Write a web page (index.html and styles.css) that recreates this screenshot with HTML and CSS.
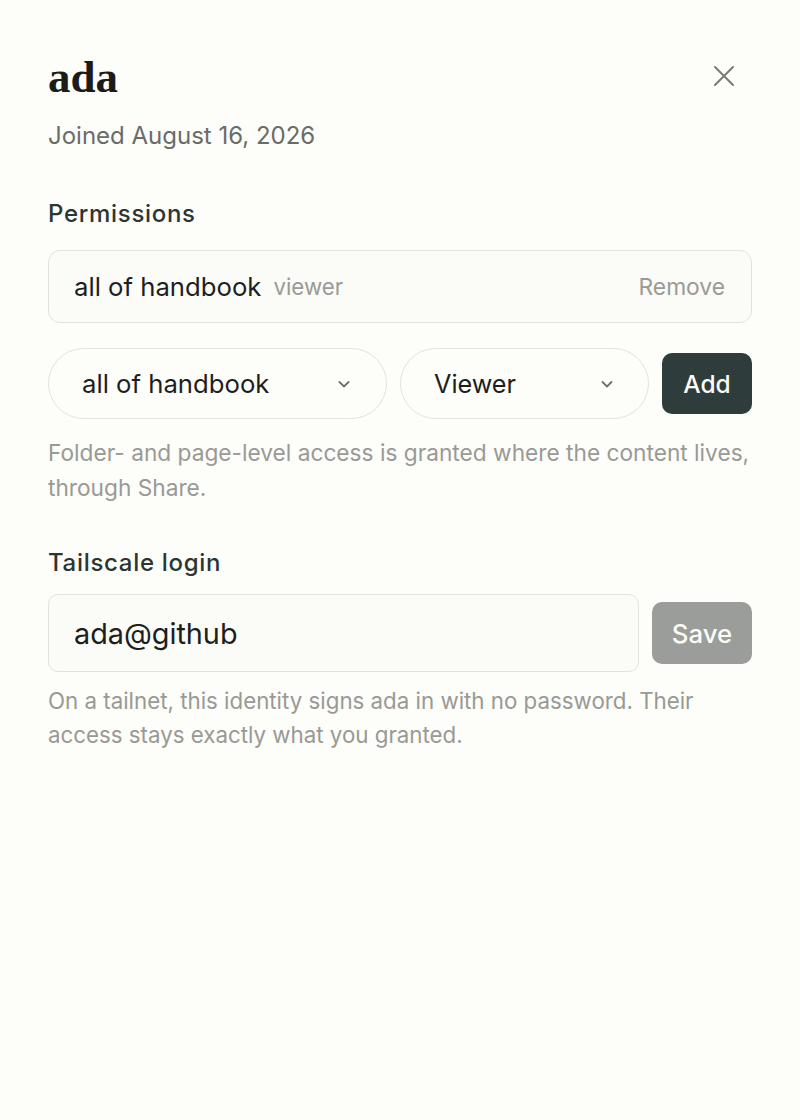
FILE: index.html
```html
<!DOCTYPE html>
<html lang="en">
<head>
<meta charset="utf-8">
<title>ada</title>
<link rel="stylesheet" href="styles.css">
</head>
<body>
<div class="panel">
  <header class="head">
    <h1 class="name">ada</h1>
    <button class="close" aria-label="Close">
      <svg width="24" height="24" viewBox="0 0 24 24" fill="none" stroke="currentColor" stroke-width="2" stroke-linecap="round"><path d="M3 3L21 21M21 3L3 21"/></svg>
    </button>
  </header>
  <p class="joined">Joined August 16, 2026</p>

  <section class="section perms">
    <h2 class="label">Permissions</h2>
    <div class="grant">
      <span class="grant-scope">all of handbook</span>
      <span class="grant-role">viewer</span>
      <span class="grant-remove">Remove</span>
    </div>
    <div class="add-row">
      <div class="select select-scope">
        <span>all of handbook</span>
        <svg class="chev" width="16" height="16" viewBox="0 0 16 16" fill="none" stroke="currentColor" stroke-width="1.8" stroke-linecap="round" stroke-linejoin="round"><path d="M3.5 6L8 10.5L12.5 6"/></svg>
      </div>
      <div class="select select-role">
        <span>Viewer</span>
        <svg class="chev" width="16" height="16" viewBox="0 0 16 16" fill="none" stroke="currentColor" stroke-width="1.8" stroke-linecap="round" stroke-linejoin="round"><path d="M3.5 6L8 10.5L12.5 6"/></svg>
      </div>
      <button class="btn btn-dark">Add</button>
    </div>
    <p class="help">Folder- and page-level access is granted where the content lives, through Share.</p>
  </section>

  <section class="section login">
    <h2 class="label">Tailscale login</h2>
    <div class="login-row">
      <div class="input">ada@github</div>
      <button class="btn btn-muted">Save</button>
    </div>
    <p class="help help-login">On a tailnet, this identity signs ada in with no password. Their access stays exactly what you granted.</p>
  </section>
</div>
</body>
</html>
```

FILE: styles.css
```css
* { box-sizing: border-box; }
html, body {
  margin: 0;
  padding: 0;
  background: #fdfdf9;
  height: 100%;
}
body {
  font-family: Inter, "Noto Sans", sans-serif;
  color: #1d1f1e;
}
.panel {
  padding: 51px 48px 0 48px;
}
.head {
  display: flex;
  justify-content: space-between;
  align-items: flex-start;
}
.name {
  margin: 0;
  font-family: "Liberation Serif", "DejaVu Serif", serif;
  font-weight: 700;
  font-size: 45px;
  line-height: 52px;
  color: #1b1b19;
}
.close {
  border: 0;
  background: none;
  padding: 0;
  margin: 13px 16px 0 0;
  color: #7a7a78;
  width: 24px;
  height: 24px;
  display: flex;
}
.joined {
  margin: 17px 0 0 0;
  font-size: 24px;
  line-height: 32px;
  color: #6b6b68;
}
.perms { margin-top: 46px; }
.login { margin-top: 42px; }
.label {
  margin: 0;
  font-size: 24px;
  font-weight: 500;
  line-height: 32px;
  letter-spacing: 0.7px;
  color: #2b3533;
}
.grant {
  margin-top: 20px;
  height: 73px;
  border: 1.5px solid #e3e3de;
  border-radius: 12px;
  display: flex;
  align-items: center;
  padding: 0 26px 0 25px;
  background: #fbfbf7;
}
.grant-scope {
  font-size: 25.7px;
  color: #1d1f1e;
}
.grant-role {
  margin-left: 12px;
  font-size: 22.3px;
  color: #9a9a96;
}
.grant-remove {
  margin-left: auto;
  font-size: 22.8px;
  color: #9a9a96;
}
.add-row {
  margin-top: 25px;
  display: flex;
  align-items: center;
  gap: 13px;
}
.select {
  height: 71px;
  border: 1.5px solid #e3e3de;
  border-radius: 36px;
  display: flex;
  align-items: center;
  justify-content: space-between;
  padding: 0 34px 0 33px;
  font-size: 25.7px;
  color: #1d1f1e;
  background: #fdfdf9;
}
.select-scope { width: 339px; }
.select-role { width: 249px; padding-left: 33px; padding-right: 33px; font-size: 25.2px; }
.chev { color: #6f6f6c; }
.btn {
  border: 0;
  font-family: Inter, "Noto Sans", sans-serif;
  font-weight: 500;
  color: #fbfbf7;
  border-radius: 10px;
  padding: 0;
}
.btn-dark {
  width: 90px;
  height: 61px;
  font-size: 24.5px;
  background: #2e3d3c;
}
.btn-muted {
  width: 100px;
  height: 62px;
  font-size: 25.8px;
  background: #9a9d99;
}
.help {
  margin: 16px 0 0 0;
  font-size: 22.7px;
  line-height: 35px;
  color: #999996;
}
.login-row {
  margin-top: 15px;
  display: flex;
  align-items: center;
  gap: 13px;
}
.input {
  flex: 1;
  height: 78px;
  border: 1.5px solid #e3e3de;
  border-radius: 10px;
  display: flex;
  align-items: center;
  padding: 0 25px;
  font-size: 28.8px;
  color: #1d1f1e;
  background: #fbfbf7;
}
.help-login { margin-top: 12px; font-size: 22.3px; line-height: 34px; }
```
